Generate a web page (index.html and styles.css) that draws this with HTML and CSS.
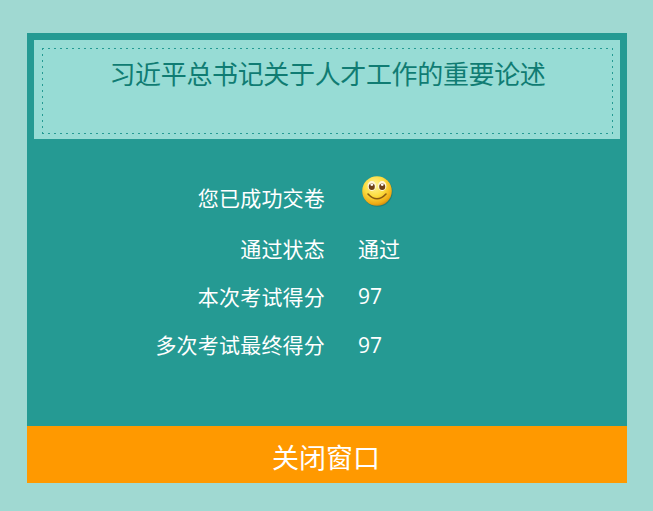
FILE: index.html
```html
<!DOCTYPE html>
<html lang="zh-CN">
<head>
    <meta charset="UTF-8">
    <title>考试结果</title>
    <link rel="stylesheet" href="styles.css">
</head>
<body>
    <div class="panel">
        <div class="header">
            <div class="header-inner">
                <h1>习近平总书记关于人才工作的重要论述</h1>
            </div>
        </div>
        <div class="result">
            <div class="row row-first">
                <div class="label">您已成功交卷</div>
                <div class="value">
                    <svg class="smile" width="32" height="32" viewBox="0 0 32 32">
                        <defs>
                            <radialGradient id="face" cx="0.42" cy="0.32" r="0.72">
                                <stop offset="0" stop-color="#fff59a"/>
                                <stop offset="0.5" stop-color="#fcdc3e"/>
                                <stop offset="0.85" stop-color="#f0ab14"/>
                                <stop offset="1" stop-color="#c9820c"/>
                            </radialGradient>
                        </defs>
                        <circle cx="16.6" cy="16.8" r="15" fill="#16665e" opacity="0.45"/>
                        <circle cx="16" cy="16" r="14.8" fill="url(#face)"/>
                        <ellipse cx="10.8" cy="11" rx="4.2" ry="5" fill="#fff6d8"/>
                        <ellipse cx="21.2" cy="11" rx="4.2" ry="5" fill="#fff6d8"/>
                        <ellipse cx="10.8" cy="11.8" rx="3" ry="3.3" fill="#6e4016"/>
                        <ellipse cx="21.2" cy="11.8" rx="3" ry="3.3" fill="#6e4016"/>
                        <ellipse cx="10.8" cy="9.8" rx="1.5" ry="1.1" fill="#fff"/>
                        <ellipse cx="21.2" cy="9.8" rx="1.5" ry="1.1" fill="#fff"/>
                        <path d="M7 19 Q16 28.5 25 19" fill="none" stroke="#8a5a10" stroke-width="1.6" stroke-linecap="round"/>
                    </svg>
                </div>
            </div>
            <div class="row">
                <div class="label">通过状态</div>
                <div class="value">通过</div>
            </div>
            <div class="row">
                <div class="label">本次考试得分</div>
                <div class="value">97</div>
            </div>
            <div class="row">
                <div class="label">多次考试最终得分</div>
                <div class="value value-num">97</div>
            </div>
        </div>
        <div class="close-btn">关闭窗口</div>
    </div>
</body>
</html>
```
FILE: styles.css
```css
body {
    margin: 0;
    padding: 33px 26px 28px 27px;
    background-color: #a0d9d2;
    font-family: "Open Sans", "Noto Sans CJK SC", sans-serif;
}
.panel {
    width: 600px;
    height: 450px;
    background-color: #259a93;
    display: flex;
    flex-direction: column;
}
.header {
    margin: 7px 7px 0;
    height: 99px;
    box-sizing: border-box;
    padding: 8px 7px 5px 8px;
    background-color: #97dcd5;
}
/* the dots in the reference are sparser than a 1px dotted border */
.header-inner {
    height: 100%;
    background-image:
        repeating-linear-gradient(to right, #259a93 0, #259a93 2px, transparent 2px, transparent 6px),
        repeating-linear-gradient(to right, #259a93 0, #259a93 2px, transparent 2px, transparent 6px),
        repeating-linear-gradient(to bottom, #259a93 0, #259a93 2px, transparent 2px, transparent 6px),
        repeating-linear-gradient(to bottom, #259a93 0, #259a93 2px, transparent 2px, transparent 6px);
    background-size: 100% 1px, 100% 1px, 1px 100%, 1px 100%;
    background-position: left top, left bottom, left top, right top;
    background-repeat: no-repeat;
}
.header-inner h1 {
    margin: 0;
    padding-top: 9px;
    font-size: 26px;
    font-weight: normal;
    line-height: 34px;
    letter-spacing: -0.35px;
    text-align: center;
    color: #107c73;
}
.result {
    flex: 1;
    padding-top: 31px;
    color: #fff;
    font-size: 21px;
}
.row {
    display: flex;
    align-items: center;
    height: 48px;
}
.row-first {
    height: 54px;
}
.label {
    width: 298px;
    text-align: right;
    letter-spacing: 0.2px;
}
.value {
    margin-left: 33px;
}
.value-num {
    padding-top: 2px;
}
.smile {
    display: block;
    margin: -12px 0 0 3px;
}
.close-btn {
    height: 57px;
    padding-right: 2px;
    line-height: 63px;
    text-align: center;
    font-size: 27px;
    color: #fff;
    background-color: #ff9900;
}
```
